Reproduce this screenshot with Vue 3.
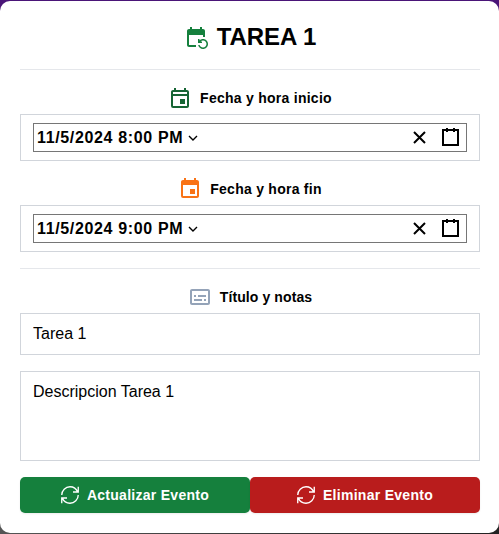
<script setup>
import { ref } from 'vue'

const dates = [
  { kind: 'start', label: 'Fecha y hora inicio', value: '11/5/2024 8:00 PM' },
  { kind: 'end', label: 'Fecha y hora fin', value: '11/5/2024 9:00 PM' },
]
const title = ref('Tarea 1')
const notes = ref('Descripcion Tarea 1')
const actions = [
  { kind: 'update', label: 'Actualizar Evento' },
  { kind: 'remove', label: 'Eliminar Evento' },
]
</script>

<template>
  <div class="backdrop">
    <main class="card">
      <header class="heading">
        <svg class="icon green" viewBox="0 0 24 24"><path d="M21 12V6c0-1.1-.9-2-2-2h-1V2h-2v2H8V2H6v2H5c-1.1 0-2 .9-2 2v14c0 1.1.9 2 2 2h7v-2H5V10h14v2h2zm-5.36 8c.43 1.45 1.77 2.5 3.36 2.5 1.93 0 3.5-1.57 3.5-3.5s-1.57-3.5-3.5-3.5c-.95 0-1.82.38-2.45 1H18V18h-4v-4h1.5v1.43c.9-.88 2.14-1.43 3.5-1.43 2.76 0 5 2.24 5 5s-2.24 5-5 5c-2.42 0-4.44-1.72-4.9-4h1.54z" /></svg>
        <h1>TAREA 1</h1>
      </header>

      <section class="dates">
        <div v-for="d in dates" :key="d.kind" class="group" :class="d.kind">
          <div class="label">
            <svg v-if="d.kind === 'start'" class="icon forest" viewBox="0 0 24 24"><path d="M19 4h-1V2h-2v2H8V2H6v2H5c-1.11 0-1.99.9-1.99 2L3 20a2 2 0 0 0 2 2h14c1.1 0 2-.9 2-2V6c0-1.1-.9-2-2-2zm0 16H5V10h14v10zm0-12H5V6h14v2zm-7 5h5v5h-5z" /></svg>
            <svg v-else class="icon orange" viewBox="0 0 24 24"><path d="M17 12h-5v5h5v-5zM16 1v2H8V1H6v2H5c-1.11 0-1.99.9-1.99 2L3 19a2 2 0 0 0 2 2h14c1.1 0 2-.9 2-2V5c0-1.1-.9-2-2-2h-1V1h-2zm3 18H5V8h14v11z" /></svg>
            <span>{{ d.label }}</span>
          </div>
          <div class="field">
            <div class="picker">
              <span class="value">{{ d.value }}</span>
              <svg class="chevron" viewBox="0 0 10 6"><path d="M1 1l4 4 4-4" /></svg>
              <svg class="clear" viewBox="0 0 13 13"><path d="M1 1l11 11M12 1L1 12" /></svg>
              <svg class="calendar" viewBox="0 0 17 18"><path d="M1 2h15v15H1zM5 0v4M12 0v4" /></svg>
            </div>
          </div>
        </div>
      </section>

      <section class="details">
        <div class="label">
          <svg class="icon slate" viewBox="0 0 24 24"><path d="M20 4H4c-1.1 0-2 .9-2 2v12c0 1.1.9 2 2 2h16c1.1 0 2-.9 2-2V6c0-1.1-.9-2-2-2zm0 14H4V6h16v12zM6 10h2v2H6zm0 4h8v2H6zm10 0h2v2h-2zm-6-4h8v2h-8z" /></svg>
          <span>Título y notas</span>
        </div>
        <input v-model="title" class="text" type="text" aria-label="Título" />
        <textarea v-model="notes" class="text notes" aria-label="Notas"></textarea>
      </section>

      <footer class="actions">
        <button v-for="a in actions" :key="a.kind" type="button" :class="a.kind">
          <svg class="refresh" viewBox="0 0 24 24"><path d="M1.75 16C3.35 19.91 7.35 23 12 23c6 0 11-5 11-11M22.25 8C20.65 4.09 16.65 1 12 1 6 1 1 6 1 12M8 16H1v7M16 8h7V1" /></svg>
          <span>{{ a.label }}</span>
        </button>
      </footer>
    </main>
  </div>
</template>

<style>
body {
  margin: 0;
  overflow: hidden;
}
</style>

<style scoped>
* {
  box-sizing: border-box;
}
.backdrop {
  height: 534px;
  padding: 1px 0;
  background: linear-gradient(#4a1578 0 50%, transparent 50%), linear-gradient(90deg, #555, #222);
  font-family: "Liberation Sans", Arial, sans-serif;
  color: #000;
}
.card {
  display: flex;
  flex-direction: column;
  height: 532px;
  padding: 0 19px 20px 20px;
  border-radius: 10px;
  background: #fff;
}
.heading {
  display: flex;
  justify-content: center;
  gap: 9px;
  height: 69px;
  padding-top: 24px;
  border-bottom: 1px solid #e5e7eb;
}
h1 {
  margin: -4px 0 0;
  font-size: 24px;
  line-height: 32px;
  font-weight: 700;
  letter-spacing: -0.1px;
}
.icon {
  flex: none;
  width: 24px;
  height: 24px;
  fill: currentColor;
}
.green { color: #15803d; }
.forest { color: #166534; }
.orange { color: #f97316; }
.slate { color: #94a3b8; }
.dates {
  height: 199px;
  padding-top: 16px;
  border-bottom: 1px solid #e5e7eb;
}
.label {
  display: flex;
  align-items: center;
  justify-content: center;
  gap: 8px;
  height: 24px;
  font-size: 14px;
  line-height: 20px;
  font-weight: 700;
  letter-spacing: 0.26px;
}
.details .label {
  letter-spacing: 0.1px;
}
.group + .group {
  margin-top: 16px;
}
.field {
  margin-top: 4px;
  padding: 8px 12px;
  border: 1px solid #d1d5db;
}
.picker {
  display: flex;
  align-items: center;
  height: 29px;
  padding: 0 7px 0 3px;
  border: 1px solid #767676;
}
.value {
  width: 148px;
  font-size: 16px;
  font-weight: 700;
  letter-spacing: 0.65px;
  white-space: nowrap;
}
svg {
  display: block;
}
.chevron,
.clear,
.calendar,
.refresh {
  flex: none;
  fill: none;
  stroke: currentColor;
}
.chevron {
  width: 10px;
  height: 6px;
  margin-left: 3px;
  stroke-width: 1.4;
}
.clear {
  width: 13px;
  height: 13px;
  margin-left: auto;
  stroke-width: 2;
}
.calendar {
  width: 17px;
  height: 18px;
  margin: -1px 0 0 16px;
  stroke-width: 2;
}
.details {
  padding-top: 16px;
}
.text {
  display: block;
  width: 100%;
  height: 42px;
  margin: 4px 0 0;
  padding: 8px 12px;
  border: 1px solid #d1d5db;
  border-radius: 0;
  background: #fff;
  color: #000;
  font: 16px/24px "Liberation Sans", Arial, sans-serif;
  resize: none;
  outline: none;
}
.notes {
  height: 90px;
  margin-top: 16px;
}
.actions {
  display: flex;
  margin-top: 16px;
}
button {
  display: flex;
  flex: 1;
  align-items: center;
  justify-content: center;
  gap: 8px;
  height: 36px;
  padding: 0;
  border: 0;
  border-radius: 5px;
  box-shadow: 0 1px 2px rgba(0, 0, 0, 0.08);
  color: #fff;
  font: 700 14px/20px "Liberation Sans", Arial, sans-serif;
  letter-spacing: 0.28px;
}
.update { background: #15803d; }
.remove { background: #b91c1c; }
.refresh {
  width: 18px;
  height: 18px;
  stroke-width: 1.8;
}
</style>
